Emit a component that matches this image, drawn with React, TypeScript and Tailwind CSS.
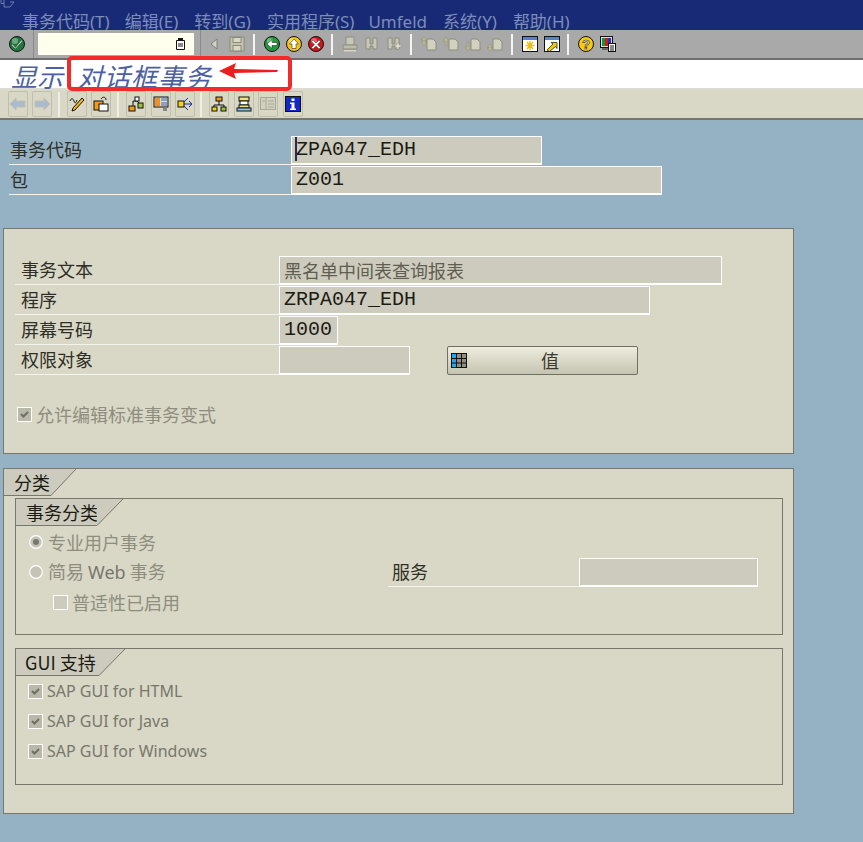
import React from "react";

const CJK = { fontFamily: '"Noto Sans CJK SC","Noto Sans",sans-serif' };
const MONO = { fontFamily: '"Liberation Mono","Noto Sans CJK SC",monospace' };
const SANS = { fontFamily: '"Noto Sans","Noto Sans CJK SC",sans-serif' };

const Svg = ({ w = 16, h = 16, children, className = "" }: { w?: number; h?: number; children: React.ReactNode; className?: string }) => (
  <svg width={w} height={h} viewBox={`0 0 ${w} ${h}`} className={`shrink-0 block ${className}`}>{children}</svg>
);

const Round = ({ fill, children }: { fill: string; children: React.ReactNode }) => (
  <Svg>
    <circle cx="8" cy="8" r="7.5" fill={fill} stroke="#111" />
    <circle cx="6" cy="5" r="3" fill="#fff" opacity=".35" />
    {children}
  </Svg>
);

const Check = () => (
  <Round fill="#1d7a3a"><path d="M3.5 8l3 3.5L12.5 4l1 1-7 8-4-4z" fill="#fff" stroke="#222" strokeWidth=".5" /></Round>
);
const Back = () => (
  <Round fill="#1f9c3a"><path d="M3 8l5-4.5V6.5h5v3H8v3z" fill="#fff" stroke="#111" strokeWidth=".5" /></Round>
);
const Up = () => (
  <Round fill="#f4c514"><path d="M8 3l4.5 5H10v4.5H6V8H3.5z" fill="#fff" stroke="#111" strokeWidth=".5" /></Round>
);
const Cancel = () => (
  <Round fill="#d4141c"><path d="M5 4l3 3 3-3 1.5 1.500-3 3 3 3L11 13 8 10l-3 3-1.500-1.500 3-3-3-3z" fill="#fff" stroke="#111" strokeWidth=".4" /></Round>
);
const Save = () => (
  <Svg><rect x="1" y="1" width="14" height="14" fill="#c4c3ae" stroke="#8a8a78" /><rect x="4" y="1.500" width="8" height="5" fill="#d9d8c6" stroke="#8a8a78" /><rect x="4" y="9.500" width="8" height="5.500" fill="#d9d8c6" stroke="#8a8a78" /></Svg>
);
const Print = () => (
  <Svg><path d="M4 1h8v8H4z" fill="#c9c8b8" stroke="#8d8d7f" /><path d="M1 9h14v4H1z" fill="#bdbcab" stroke="#8d8d7f" /><rect x="2" y="14" width="12" height="1.500" fill="#d6d5c6" /></Svg>
);
const Find = ({ plus }: { plus?: boolean }) => (
  <Svg>
    <path d="M2 2h4v6h3V2h4v11h-4v-3H6v3H2z" fill="#c9c8b8" stroke="#8d8d7f" />
    {plus && <path d="M11 7h2v2h2v2h-2v2h-2v-2H9V9h2z" fill="#e3e2d3" stroke="#8d8d7f" strokeWidth=".5" />}
  </Svg>
);
const Page = ({ arrows }: { arrows: string }) => (
  <Svg>
    <path d="M6 3h6l3 3v8H6z" fill="#d2d1bf" stroke="#8d8d7f" />
    <path d={arrows} fill="#b9b88f" stroke="#8d8d7f" strokeWidth=".5" />
  </Svg>
);
const Session = () => (
  <Svg>
    <rect x=".5" y=".5" width="15" height="15" fill="#fff" stroke="#111" />
    <rect x="1" y="1" width="14" height="3" fill="#5a7fd0" />
    <path d="M8 5v9M3.500 9.500h9M5 6l6 7M11 6l-6 7" stroke="#e6c200" strokeWidth="1.400" />
  </Svg>
);
const Shortcut = () => (
  <Svg>
    <rect x=".5" y=".5" width="15" height="15" fill="#fff" stroke="#111" />
    <rect x="1" y="1" width="14" height="3" fill="#5a7fd0" />
    <path d="M3 14l6-6-2-1.500h6v6l-1.500-2-6 5z" fill="#f0d000" stroke="#111" strokeWidth=".7" />
  </Svg>
);
const Help = () => (
  <Svg>
    <circle cx="8" cy="8" r="7.500" fill="#f7c910" stroke="#111" />
    <text x="8" y="13" textAnchor="middle" fontSize="13" fontWeight="700" fill="#fff" stroke="#111" strokeWidth=".6" fontFamily="Liberation Sans">?</text>
  </Svg>
);
const Layout = () => (
  <Svg>
    <rect x=".5" y=".5" width="12" height="11" fill="#ddd" stroke="#111" />
    <rect x="2" y="2" width="3" height="8" fill="#0a9a3a" /><rect x="5" y="2" width="3" height="8" fill="#d8141c" /><rect x="8" y="2" width="3" height="8" fill="#2030c0" />
    <rect x="8.500" y="7.500" width="7" height="8" fill="#fff" stroke="#111" />
    <path d="M10 10h4M10 12h4M10 14h4" stroke="#111" />
    <rect x="2" y="12" width="6" height="2" fill="#666" />
  </Svg>
);

const Sep = ({ ml, mr }: { ml: string; mr: string }) => <div className={`w-[2px] h-[21px] bg-[#f4f4f0] ${ml} ${mr}`} />;

const AppBtn = ({ children, className = "" }: { children: React.ReactNode; className?: string }) => (
  <div className={`w-[20px] h-[26px] flex items-center justify-center border border-[#c0bfad] rounded-[2px] bg-[#d9d8c6] ${className}`}>{children}</div>
);
const ASep = ({ ml, mr }: { ml: string; mr: string }) => <div className={`w-[2px] h-[25px] bg-[#f0efe6] ${ml} ${mr}`} />;

const Field = ({ w, children, tone, font = MONO, size = "text-[20px]" }: { w: string; children?: React.ReactNode; tone?: string; font?: React.CSSProperties; size?: string }) => (
  <div className={`${w} h-[29px] mt-[1px] border border-white border-b-2 bg-[#cdcbbd] pl-[4px] leading-[26px] ${size} ${tone ?? "text-[#1b1b14]"} whitespace-nowrap overflow-hidden`} style={font}>{children}</div>
);
const Label = ({ w, children }: { w: string; children: React.ReactNode }) => (
  <div className={`${w} h-[30px] border-b border-[#f4f4ee] text-[18px] leading-[29px] text-[#2f2f28] whitespace-nowrap`} style={CJK}>{children}</div>
);

const Tab = ({ w, children, tri = 27 }: { w: string; children: React.ReactNode; tri?: number }) => (
  <div className="flex h-[27px]">
    <div className={`${w} h-[27px] bg-[#cdcbbd] border-b border-[#77776b] text-[18px] leading-[27px] text-[#1b1b14] whitespace-nowrap`} style={CJK}>{children}</div>
    <svg width={tri} height={27} viewBox={`0 0 ${tri} 27`} className="block shrink-0">
      <path d={`M0 0L${tri} 0L0 27z`} fill="#cdcbbd" />
      <path d={`M0 26.500L${tri} 0`} stroke="#77776b" fill="none" />
    </svg>
  </div>
);

const CheckBox = ({ on = true, className = "" }: { on?: boolean; className?: string }) => (
  <svg width="15" height="15" viewBox="0 0 15 15" className={`block shrink-0 ${className}`}>
    <rect x=".5" y=".5" width="14" height="14" fill={on ? "#b9b8a9" : "#cdcbbd"} stroke="#fff" />
    {on && <path d="M4 7l2.500 2.500L11 5" fill="none" stroke="#6f6f66" strokeWidth="2" />}
  </svg>
);
const Radio = ({ on = false }: { on?: boolean }) => (
  <svg width="14" height="14" viewBox="0 0 14 14" className="block shrink-0">
    <circle cx="7" cy="7" r="6.300" fill="#c4c3b5" stroke="#fff" strokeWidth="1.200" />
    {on && <circle cx="7" cy="7" r="3" fill="#77776e" />}
  </svg>
);

const Menu = ({ ml, children }: { ml: string; children: React.ReactNode }) => <span className={`${ml} whitespace-nowrap`}>{children}</span>;

export default function App() {
  return (
    <div className="w-[863px] h-[842px] overflow-hidden bg-[#95b1c4]">
      {/* menu bar */}
      <div className="relative h-[30px] bg-[#182a75] flex items-start pl-[22px] pt-[10px] text-[17px] leading-[24px] text-[#7d8db9] overflow-hidden" style={SANS}>
        <svg width="16" height="9" viewBox="0 0 16 9" className="absolute left-0 top-0">
          <path d="M1 0v3.500h3M4 0v7h6l4-5h-4" fill="none" stroke="#6c7cab" />
        </svg>
        <Menu ml="">事务代码(T)</Menu>
        <Menu ml="ml-[15px]">编辑(E)</Menu>
        <Menu ml="ml-[16px]">转到(G)</Menu>
        <Menu ml="ml-[16px]">实用程序(S)</Menu>
        <Menu ml="ml-[14px]">Umfeld</Menu>
        <Menu ml="ml-[16px]">系统(Y)</Menu>
        <Menu ml="ml-[16px]">帮助(H)</Menu>
      </div>

      {/* system toolbar */}
      <div className="h-[30px] bg-[#a9a9a9] border-b-2 border-[#6e6e6e] flex items-center pl-[9px] -mt-[0px]">
        <Check />
        <div className="w-[1px] h-[28px] bg-[#8a8a8a] ml-[8px]" />
        <div className="ml-[4px] w-[156px] h-[22px] bg-[#ffffee] flex items-center justify-end pr-[9px]">
          <svg width="9" height="12" viewBox="0 0 9 12" className="block"><path d="M.5 2.500h8v9h-8z" fill="#fff" stroke="#111" /><rect x="2" y="0" width="5" height="3" fill="#111" /><path d="M2 6h5M2 8h5" stroke="#111" /></svg>
        </div>
        <div className="w-[1px] h-[28px] bg-[#8a8a8a] ml-[6px]" />
        <svg width="8" height="12" viewBox="0 0 8 12" className="block ml-[9px]"><path d="M7 1v10L1 6z" fill="#d4d4c4" stroke="#7e7e74" /></svg>
        <div className="ml-[11px]"><Save /></div>
        <Sep ml="ml-[8px]" mr="mr-[9px]" />
        <Back />
        <div className="ml-[6px]"><Up /></div>
        <div className="ml-[6px]"><Cancel /></div>
        <Sep ml="ml-[7px]" mr="mr-[9px]" />
        <Print />
        <div className="ml-[6px]"><Find /></div>
        <div className="ml-[6px]"><Find plus /></div>
        <Sep ml="ml-[8px]" mr="mr-[9px]" />
        <Page arrows="M3 1l3 3H4v2h2L3 9 0 6h2V4H0z" />
        <div className="ml-[6px]"><Page arrows="M3 1l3 4H4v5H2V5H0z" /></div>
        <div className="ml-[6px]"><Page arrows="M3 15l3-4H4V6H2v5H0z" /></div>
        <div className="ml-[6px]"><Page arrows="M3 8l3 3H4v1h2l-3 3-3-3h2v-1H0z" /></div>
        <Sep ml="ml-[8px]" mr="mr-[9px]" />
        <Session />
        <div className="ml-[6px]"><Shortcut /></div>
        <Sep ml="ml-[7px]" mr="mr-[9px]" />
        <Help />
        <div className="ml-[6px]"><Layout /></div>
      </div>

      {/* title */}
      <div className="relative h-[30px] mt-[0px] bg-white border-b-2 border-[#dddcd0] pl-[11px] text-[26px] leading-[32px] italic text-[#4d5fa3] whitespace-nowrap" style={CJK}>
        <span>显示</span><span className="ml-[14px] tracking-[1px]">对话框事务</span>
        <div className="absolute left-[67px] top-[-4px] w-[225px] h-[35px] border-[4px] border-[#f22a2a] rounded-[5px]" />
        <svg width="60" height="16" viewBox="0 0 60 16" className="absolute left-[219px] top-[3px]">
          <path d="M0 8L17 0l-2 6 44 1-1 2-43 1 2 6z" fill="#ee1c1c" />
        </svg>
      </div>

      {/* application toolbar */}
      <div className="h-[30px] bg-[#d9d8c6] border-b-2 border-[#77776b] flex items-center pl-[8px]">
        <AppBtn><svg width="16" height="12" viewBox="0 0 16 12"><path d="M0 6l6-6v3h9v6H6v3z" fill="#a9bbcd" stroke="#c0c0b4" /></svg></AppBtn>
        <AppBtn className="ml-[4px]"><svg width="16" height="12" viewBox="0 0 16 12"><path d="M16 6l-6-6v3H1v6h9v3z" fill="#a9bbcd" stroke="#c0c0b4" /></svg></AppBtn>
        <ASep ml="ml-[6px]" mr="mr-[7px]" />
        <AppBtn>
          <Svg>
            <path d="M1 5c1-3 3-3 4 0s2 2 3-1" fill="none" stroke="#111" />
            <path d="M13 2l2 2-9 10-3 1 1-3z" fill="#f2b21a" stroke="#111" />
          </Svg>
        </AppBtn>
        <AppBtn className="ml-[4px]">
          <Svg>
            <rect x="1" y="5" width="9" height="9" fill="#f29a1a" stroke="#111" />
            <rect x="6" y="8" width="9" height="7" fill="#fff" stroke="#111" />
            <path d="M8 3c2-3 5-2 5 1" fill="none" stroke="#111" />
          </Svg>
        </AppBtn>
        <ASep ml="ml-[6px]" mr="mr-[7px]" />
        <AppBtn>
          <Svg>
            <path d="M5 10V5h4M9 5l3 3" fill="none" stroke="#111" />
            <rect x="1" y="10" width="6" height="5" fill="#f29a1a" stroke="#111" />
            <rect x="10" y="7" width="5" height="5" fill="#9cc23a" stroke="#111" />
            <rect x="7" y="1" width="4" height="4" fill="#fff" stroke="#111" />
          </Svg>
        </AppBtn>
        <AppBtn className="ml-[5px]">
          <Svg>
            <rect x="1" y="1" width="14" height="10" fill="#f0d8a0" stroke="#111" />
            <rect x="2" y="2" width="5" height="8" fill="#e99030" />
            <rect x="8" y="2" width="6" height="3" fill="#8ca0c8" />
            <rect x="8" y="6" width="6" height="4" fill="#8ca0c8" />
            <rect x="10" y="12" width="4" height="3" fill="#888" />
          </Svg>
        </AppBtn>
        <AppBtn className="ml-[4px]">
          <Svg>
            <rect x="1" y="5" width="6" height="6" fill="#f2d21a" stroke="#111" />
            <path d="M7 8h8M12 5l3 3-3 3M7 6l4-4M7 10l4 4" fill="none" stroke="#1a2a9a" />
          </Svg>
        </AppBtn>
        <ASep ml="ml-[5px]" mr="mr-[7px]" />
        <AppBtn>
          <Svg>
            <path d="M8 5v4M3 12V9h10v3" fill="none" stroke="#111" />
            <rect x="5" y="1" width="6" height="4" fill="#f29a1a" stroke="#111" />
            <rect x="1" y="11" width="5" height="4" fill="#f2d21a" stroke="#111" />
            <rect x="10" y="11" width="5" height="4" fill="#9cc23a" stroke="#111" />
          </Svg>
        </AppBtn>
        <AppBtn className="ml-[5px]">
          <Svg>
            <rect x="3" y="1" width="10" height="4" fill="#f2e27a" stroke="#111" />
            <rect x="4" y="5" width="8" height="4" fill="#fff" stroke="#111" />
            <rect x="3" y="9" width="10" height="3" fill="#f2e27a" stroke="#111" />
            <rect x="1" y="12" width="14" height="3" fill="#8cc8e8" stroke="#111" />
          </Svg>
        </AppBtn>
        <AppBtn className="ml-[4px]">
          <Svg>
            <rect x=".5" y="1.500" width="15" height="12" fill="#d2d1c0" stroke="#a9a898" />
            <path d="M6 2v11M8 5h6M8 8h6M8 11h6M2 5h3" stroke="#a9a898" />
          </Svg>
        </AppBtn>
        <AppBtn className="ml-[5px]">
          <svg width="16" height="16" viewBox="0 0 16 16" className="block">
            <rect x=".5" y=".5" width="15" height="15" fill="#1428c8" stroke="#111" />
            <path d="M6.500 2.500h3v2.500h-3zM5 6.500h4.500v6H11v1.500H5v-1.500h1.500V8H5z" fill="#fff" />
          </svg>
        </AppBtn>
      </div>

      {/* header fields */}
      <div className="pl-[9px] pt-[15px]">
        <div className="flex">
          <Label w="w-[282px] pl-[1px]">事务代码</Label>
          <div className="relative">
            <Field w="w-[251px]">ZPA047_EDH</Field>
            <div className="absolute left-[4px] top-[2px] w-[2px] h-[24px] bg-[#2b2b55]" />
          </div>
        </div>
        <div className="flex">
          <Label w="w-[282px] pl-[1px]">包</Label>
          <Field w="w-[371px]">Z001</Field>
        </div>
      </div>

      {/* panel 1 */}
      <div className="ml-[3px] mt-[33px] w-[791px] h-[226px] border border-[#77776b] bg-[#d9d8c6] pl-[11px] pt-[26px]">
        <div className="flex"><Label w="w-[264px] pl-[6px]">事务文本</Label><Field w="w-[443px]" font={CJK} size="text-[16px]" tone="text-[#5f5e50]"><span className="text-[18px]">黑名单中间表查询报表</span></Field></div>
        <div className="flex"><Label w="w-[264px] pl-[6px]">程序</Label><Field w="w-[371px]">ZRPA047_EDH</Field></div>
        <div className="flex"><Label w="w-[264px] pl-[6px]">屏幕号码</Label><Field w="w-[59px]">1000</Field></div>
        <div className="flex">
          <Label w="w-[264px] pl-[6px]">权限对象</Label>
          <Field w="w-[131px]" />
          <div className="ml-[37px] mt-[1px] w-[191px] h-[29px] border border-[#6f6f64] rounded-[2px] bg-gradient-to-b from-[#eeedde] to-[#c5c4b2] flex items-center pl-[3px] pr-[4px] text-[18px] text-[#3b3a30]" style={CJK}>
            <svg width="16" height="15" viewBox="0 0 16 15" className="block shrink-0">
              <rect x=".5" y=".5" width="15" height="14" fill="#8f8f84" stroke="#111" />
              <rect x="1" y="1" width="4" height="13" fill="#1fa8f0" />
              <path d="M5.500 0v15M10.500 0v15M0 5.500h16M0 10h16" stroke="#111" />
            </svg>
            <span className="flex-1 text-center">值</span>
          </div>
        </div>
        <div className="flex items-center -ml-[-2px] mt-[24px] h-[30px] text-[18px] text-[#8e8d7e]" style={CJK}>
          <CheckBox />
          <span className="ml-[4px]">允许编辑标准事务变式</span>
        </div>
      </div>

      {/* panel 2 */}
      <div className="ml-[3px] mt-[14px] w-[791px] h-[346px] border border-[#77776b] bg-[#d9d8c6]">
        <Tab w="w-[47px] pl-[10px]" tri={25}>分类</Tab>
        <div className="ml-[11px] mt-[2px] w-[768px] h-[137px] border border-[#77776b]">
          <Tab w="w-[81px] pl-[10px]" tri={26}>事务分类</Tab>
          <div className="flex items-center h-[30px] pl-[13px] mt-[1px] text-[18px] text-[#8e8d7e]" style={CJK}>
            <Radio on /><span className="ml-[5px]">专业用户事务</span>
          </div>
          <div className="flex h-[30px] pl-[13px] text-[18px] text-[#8e8d7e]" style={CJK}>
            <div className="flex items-center w-[359px]">
              <Radio /><span className="ml-[5px]">简易 <span style={SANS} className="text-[#77776b]">Web</span> 事务</span>
            </div>
            <Label w="w-[191px] pl-[4px]">服务</Label>
            <Field w="w-[179px]" />
          </div>
          <div className="flex items-center h-[30px] pl-[37px] text-[18px] text-[#8e8d7e]" style={CJK}>
            <CheckBox on={false} /><span className="ml-[4px]">普适性已启用</span>
          </div>
        </div>
        <div className="ml-[11px] mt-[13px] w-[768px] h-[137px] border border-[#77776b]">
          <Tab w="w-[83px] pl-[9px]" tri={26}>GUI 支持</Tab>
          {["SAP GUI for HTML", "SAP GUI for Java", "SAP GUI for Windows"].map((t) => (
            <div key={t} className="flex items-center h-[30px] pl-[12px] text-[16px] text-[#77776b]" style={SANS}>
              <CheckBox /><span className="ml-[4px]">{t}</span>
            </div>
          ))}
        </div>
      </div>
    </div>
  );
}
